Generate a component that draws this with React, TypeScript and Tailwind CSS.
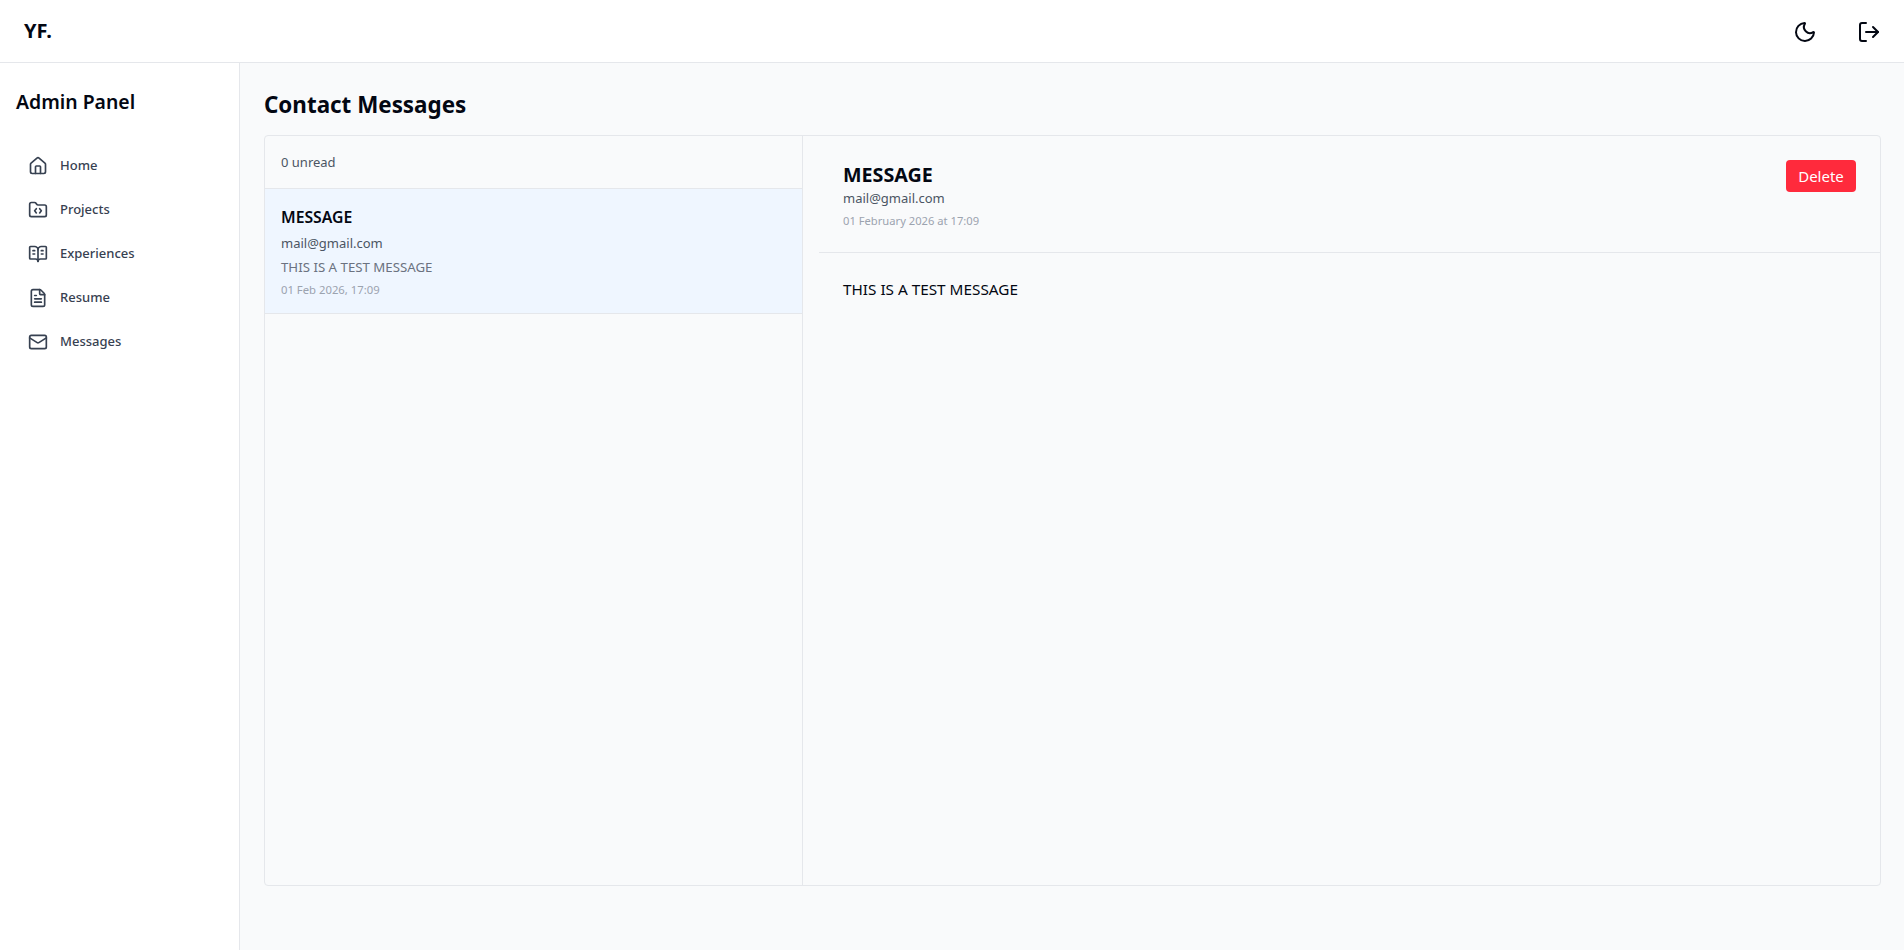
import { BookOpenText, FileText, FolderCode, House, LogOut, Mail, Moon } from 'lucide-react';

const navItems = [
    { label: 'Home', icon: House },
    { label: 'Projects', icon: FolderCode },
    { label: 'Experiences', icon: BookOpenText },
    { label: 'Resume', icon: FileText },
    { label: 'Messages', icon: Mail },
];

export default function App() {
    return (
        <div className="h-[950px] flex flex-col overflow-hidden bg-[#f9fafb] text-[#030712] font-['Noto_Sans',sans-serif]">
            {/* Top bar */}
            <header className="h-[63px] shrink-0 bg-white border-b border-[#e5e7eb] flex items-center justify-between pl-6 pr-[23px]">
                <span className="text-xl font-bold">YF.</span>
                <div className="flex items-center gap-[40px] pt-px">
                    <Moon size={24} strokeWidth={2} />
                    <LogOut size={24} strokeWidth={2} />
                </div>
            </header>

            <div className="flex flex-1 min-h-0">
                {/* Sidebar */}
                <aside className="w-[240px] shrink-0 bg-white border-r border-[#e5e7eb] px-4 pt-[25px] pb-6">
                    <h2 className="text-[19.4px] font-semibold leading-7 mb-8">Admin Panel</h2>
                    <nav className="flex flex-col gap-2 text-[#374151]">
                        {navItems.map((item) => (
                            <a key={item.label} className="h-9 px-3 flex items-center gap-3 text-[13px] font-medium">
                                <item.icon size={20} strokeWidth={2} />
                                {item.label}
                            </a>
                        ))}
                    </nav>
                </aside>

                {/* Main */}
                <main className="flex-1 min-w-0 pl-6 pr-[23px] pt-[26px] pb-[64px] flex flex-col">
                    <h1 className="text-[22.4px] font-bold leading-8 mb-[14px]">Contact Messages</h1>
                    <div className="flex-1 min-h-0 flex border border-[#e5e7eb] rounded">
                        <div className="w-[538px] shrink-0 border-r border-[#e5e7eb] flex flex-col">
                            <div className="h-[53px] shrink-0 px-4 pt-px flex items-center border-b border-[#e5e7eb] text-[13px] text-[#4b5563]">
                                0 unread
                            </div>
                            <div className="h-[125px] p-4 bg-[#eff6ff] border-b border-[#e5e7eb]">
                                <p className="text-[15.75px] font-semibold leading-6">MESSAGE</p>
                                <p className="text-[13px] text-[#4b5563] leading-5 mt-1">mail@gmail.com</p>
                                <p className="text-[13.25px] text-[#6b7280] leading-5 mt-1">THIS IS A TEST MESSAGE</p>
                                <p className="text-[11.3px] text-[#9ca3af] leading-4 mt-[5px]">01 Feb 2026, 17:09</p>
                            </div>
                        </div>
                        <div className="flex-1 min-w-0 pl-4">
                            <div className="h-[117px] border-b border-[#e5e7eb] px-6 pt-6 flex justify-between">
                                <div className="pt-px">
                                    <h3 className="text-[19.7px] font-bold leading-[27px]">MESSAGE</h3>
                                    <p className="text-[13px] text-[#4b5563] leading-5">mail@gmail.com</p>
                                    <p className="text-[11.2px] text-[#9ca3af] leading-4 mt-[5px]">01 February 2026 at 17:09</p>
                                </div>
                                <button className="h-8 w-[70px] rounded bg-[#ff2a3c] text-white text-[15px]">Delete</button>
                            </div>
                            <p className="px-6 pt-6 leading-6 text-[15.3px]">THIS IS A TEST MESSAGE</p>
                        </div>
                    </div>
                </main>
            </div>
        </div>
    );
}
